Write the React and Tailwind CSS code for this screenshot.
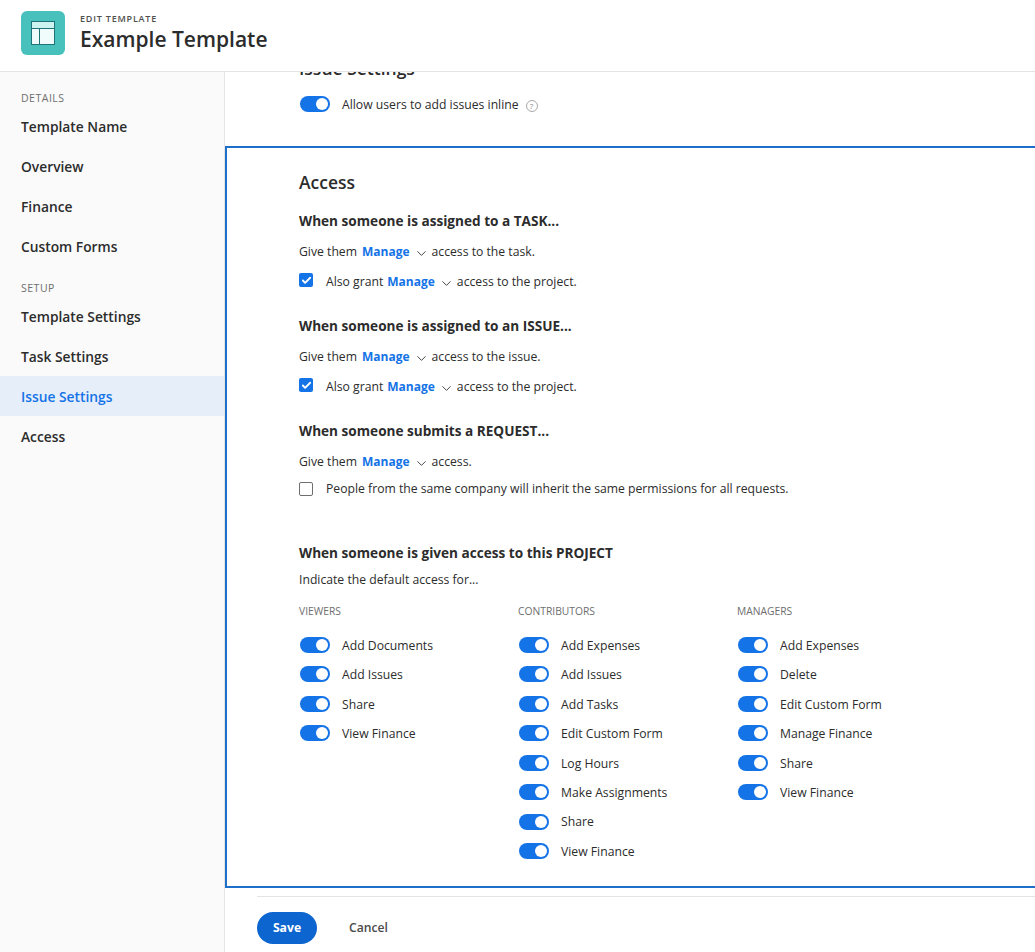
import { ChevronDown, Check } from "lucide-react";

const font = "font-['Open_Sans',sans-serif]";

const detailsLinks = ["Template Name", "Overview", "Finance", "Custom Forms"];
const setupLinks = ["Template Settings", "Task Settings", "Issue Settings", "Access"];

const columns = [
  {
    title: "VIEWERS",
    items: ["Add Documents", "Add Issues", "Share", "View Finance"],
  },
  {
    title: "CONTRIBUTORS",
    items: [
      "Add Expenses",
      "Add Issues",
      "Add Tasks",
      "Edit Custom Form",
      "Log Hours",
      "Make Assignments",
      "Share",
      "View Finance",
    ],
  },
  {
    title: "MANAGERS",
    items: ["Add Expenses", "Delete", "Edit Custom Form", "Manage Finance", "Share", "View Finance"],
  },
];

function Toggle() {
  return (
    <span className="flex h-4 w-[30px] shrink-0 items-center justify-end rounded-full bg-[#1473e6] pr-[2px]">
      <span className="h-3 w-3 rounded-full bg-white" />
    </span>
  );
}

function Checkbox({ checked }) {
  if (checked) {
    return (
      <span className="flex h-[14px] w-[14px] shrink-0 -translate-y-[2px] items-center justify-center rounded-[2px] bg-[#1473e6]">
        <Check size={11} strokeWidth={4} className="text-white" />
      </span>
    );
  }
  return <span className="h-[14px] w-[14px] shrink-0 rounded-[2px] border border-[#6e6e6e] bg-white" />;
}

function Manage() {
  return (
    <>
      <span className="ml-1 text-[12px] font-bold text-[#1473e6]">Manage</span>
      <ChevronDown size={15} strokeWidth={1.5} className="ml-1 mr-[3px] mt-[2px] text-[#3a3a3a]" />
    </>
  );
}

function AccessRule({ title, after, grant, className }) {
  return (
    <div className={className}>
      <h3 className="flex h-5 items-center text-[13.6px] font-bold text-[#2c2c2c]">{title}</h3>
      <p className="mt-[11px] flex h-5 items-center text-[12.2px] text-[#2c2c2c]">
        <span className="mr-[1px]">Give them</span> <Manage /> {after}
      </p>
      {grant && (
        <div className="mt-[10px] flex h-5 items-center text-[12.2px] text-[#2c2c2c]">
          <Checkbox checked />
          <span className="ml-[13px]">Also grant</span>
          <Manage />
          access to the project.
        </div>
      )}
    </div>
  );
}

function SideSection({ label, links }) {
  return (
    <div>
      <div className="flex h-[18px] items-center px-[21px] pt-1 text-[10.5px] tracking-[0.5px] text-[#6e6e6e]">{label}</div>
      <div>
        {links.map((link) => (
          <div
            key={link}
            className={`flex h-10 items-center px-[21px] pt-[2px] text-[13.8px] font-semibold ${
              link === "Issue Settings" ? "bg-[#e6eefa] text-[#1473e6]" : "text-[#2c2c2c]"
            }`}
          >
            {link}
          </div>
        ))}
      </div>
    </div>
  );
}

export default function App() {
  return (
    <div className={`flex h-[952px] w-[1035px] flex-col overflow-hidden bg-white ${font}`}>
      {/* Header */}
      <header className="flex h-[72px] shrink-0 items-center gap-[15px] border-b border-[#e4e4e4] pb-[5px] pl-[21px]">
        <div className="flex h-11 w-11 items-center justify-center rounded-[6px] bg-[#48c1bd]">
          <svg width="24" height="24" viewBox="0 0 24 24">
            <rect x="0.5" y="0.5" width="23" height="23" fill="#f0fbfb" stroke="#1d7378" />
            <rect x="1" y="1" width="22" height="6" fill="#cdf3f1" />
            <path d="M1 7.5H23M8.5 7.5V23" stroke="#1d7378" fill="none" />
          </svg>
        </div>
        <div>
          <div className="text-[9px] font-semibold leading-[12px] tracking-[0.8px] text-[#505050]">EDIT TEMPLATE</div>
          <div className="text-[21px] font-semibold leading-[28px] text-[#2c2c2c]">Example Template</div>
        </div>
      </header>

      <div className="flex min-h-0 flex-1">
        {/* Sidebar */}
        <aside className="flex w-[225px] shrink-0 flex-col gap-3 border-r border-[#e4e4e4] bg-[#fafafa] pt-4">
          <SideSection label="DETAILS" links={detailsLinks} />
          <SideSection label="SETUP" links={setupLinks} />
        </aside>

        {/* Main */}
        <main className="min-w-0 flex-1 overflow-hidden">
          <div className="-mt-4 pl-[74px]">
            <h2 className="flex h-6 items-center text-[17.5px] font-semibold text-[#2c2c2c]">Issue Settings</h2>
            <div className="mt-[14px] flex h-5 items-center pl-[1px] text-[12.2px] text-[#2c2c2c]">
              <Toggle />
              <span className="ml-3 mt-[2px]">Allow users to add issues inline</span>
              <span className="ml-[7px] mt-[3px] flex h-3 w-3 items-center justify-center rounded-full border border-[#a8a8a8] text-[8px] leading-none text-[#8a8a8a]">
                ?
              </span>
            </div>
          </div>

          <section className="-mr-[2px] mt-8 h-[742px] border-2 border-[#1e6fc9] pl-[72px] pt-[22px]">
            <h2 className="flex h-6 items-center text-[17.5px] font-semibold text-[#2c2c2c]">Access</h2>
            <AccessRule className="mt-[17px]" title="When someone is assigned to a TASK..." after="access to the task." grant />
            <AccessRule className="mt-6" title="When someone is assigned to an ISSUE..." after="access to the issue." grant />
            <AccessRule className="mt-6" title="When someone submits a REQUEST..." after="access." />
            <div className="mt-[7px] flex h-5 items-center text-[12.2px] text-[#2c2c2c]">
              <Checkbox />
              <span className="ml-[13px]">People from the same company will inherit the same permissions for all requests.</span>
            </div>

            <h3 className="mt-[44px] flex h-5 items-center text-[13.6px] font-bold text-[#2c2c2c]">
              When someone is given access to this PROJECT
            </h3>
            <p className="mt-[7px] flex h-5 items-center text-[12.2px] text-[#2c2c2c]">Indicate the default access for...</p>

            <div className="mt-3 flex">
              {columns.map((col) => (
                <div key={col.title} className="w-[219px]">
                  <div className="flex h-5 items-center text-[10.3px] text-[#6e6e6e]">{col.title}</div>
                  <div className="mt-[13px] flex flex-col gap-[9.43px] pl-[1px]">
                    {col.items.map((item) => (
                      <div key={item} className="flex h-5 items-center text-[12.2px] text-[#2c2c2c]">
                        <Toggle />
                        <span className="ml-3 mt-[2px]">{item}</span>
                      </div>
                    ))}
                  </div>
                </div>
              ))}
            </div>
          </section>

          {/* Footer */}
          <div className="ml-[32px] mt-2 border-t border-[#e4e4e4] pt-[15px]">
            <div className="flex items-center">
              <button className="h-8 w-[60px] rounded-full bg-[#0d66d0] text-[12.2px] font-bold text-white">Save</button>
              <button className="ml-8 text-[12.2px] font-semibold text-[#4b4b4b]">Cancel</button>
            </div>
          </div>
        </main>
      </div>
    </div>
  );
}
